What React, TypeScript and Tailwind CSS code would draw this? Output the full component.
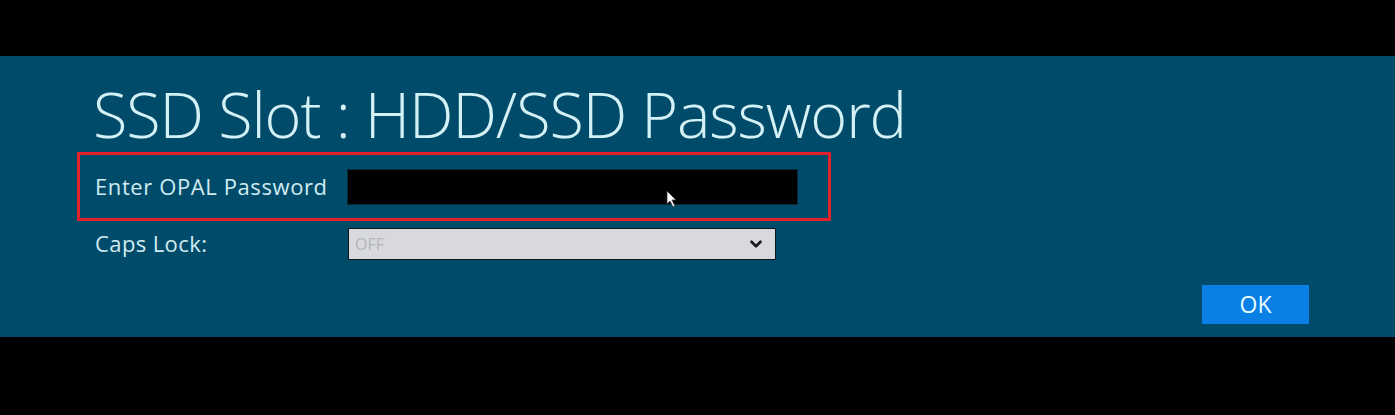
import { ChevronDown } from "lucide-react";

export default function App() {
  return (
    <div
      className="w-[1395px] h-[415px] bg-black flex flex-col"
      style={{ fontFamily: '"Open Sans", "Noto Sans", sans-serif' }}
    >
      <div className="h-[56px] shrink-0" />
      <div className="h-[281px] bg-[#014b6a] flex flex-col pl-[77px] pr-[86px]">
        <h1 className="mt-[22px] ml-[16px] text-[63px] leading-[72px] font-light text-[#d4f1f6] tracking-[-1.1px]">
          SSD Slot : HDD/SSD Password
        </h1>
        <div className="mt-[2px] w-[754px] h-[69px] border-[3px] border-[#e3202b] flex items-center pl-[15px]">
          <span className="w-[252px] text-[22px] font-medium text-[#d0ecf2] tracking-[0.6px]">
            Enter OPAL Password
          </span>
          <div className="relative w-[451px] h-[36px] bg-black border border-[#0a2a3a]">
            <svg
              className="absolute left-[318px] top-[20px]"
              width="12"
              height="18"
              viewBox="0 0 12 18"
            >
              <path d="M1 1 L1 14 L4 11 L7 17 L9 16 L6 10 L10 10 Z" fill="#fff" stroke="#333" strokeWidth="0.8" />
            </svg>
          </div>
        </div>
        <div className="mt-[6px] flex items-center pl-[18px]">
          <span className="w-[253px] text-[22px] font-medium text-[#d0ecf2] tracking-[0.4px]">
            Caps Lock:
          </span>
          <div className="w-[428px] h-[32px] bg-[#d8d9dd] border border-[#0a1a24] flex items-center justify-between pl-[6px] pr-[10px]">
            <span className="text-[16px] text-[#b4b5b8]">OFF</span>
            <ChevronDown className="w-[18px] h-[18px] text-[#1a1a1a]" strokeWidth={3.5} />
          </div>
        </div>
        <div className="mt-[25px] flex justify-end">
          <button className="w-[107px] h-[39px] bg-[#0a7fe6] text-[23px] font-medium text-[#e8fbff]">
            OK
          </button>
        </div>
      </div>
    </div>
  );
}
